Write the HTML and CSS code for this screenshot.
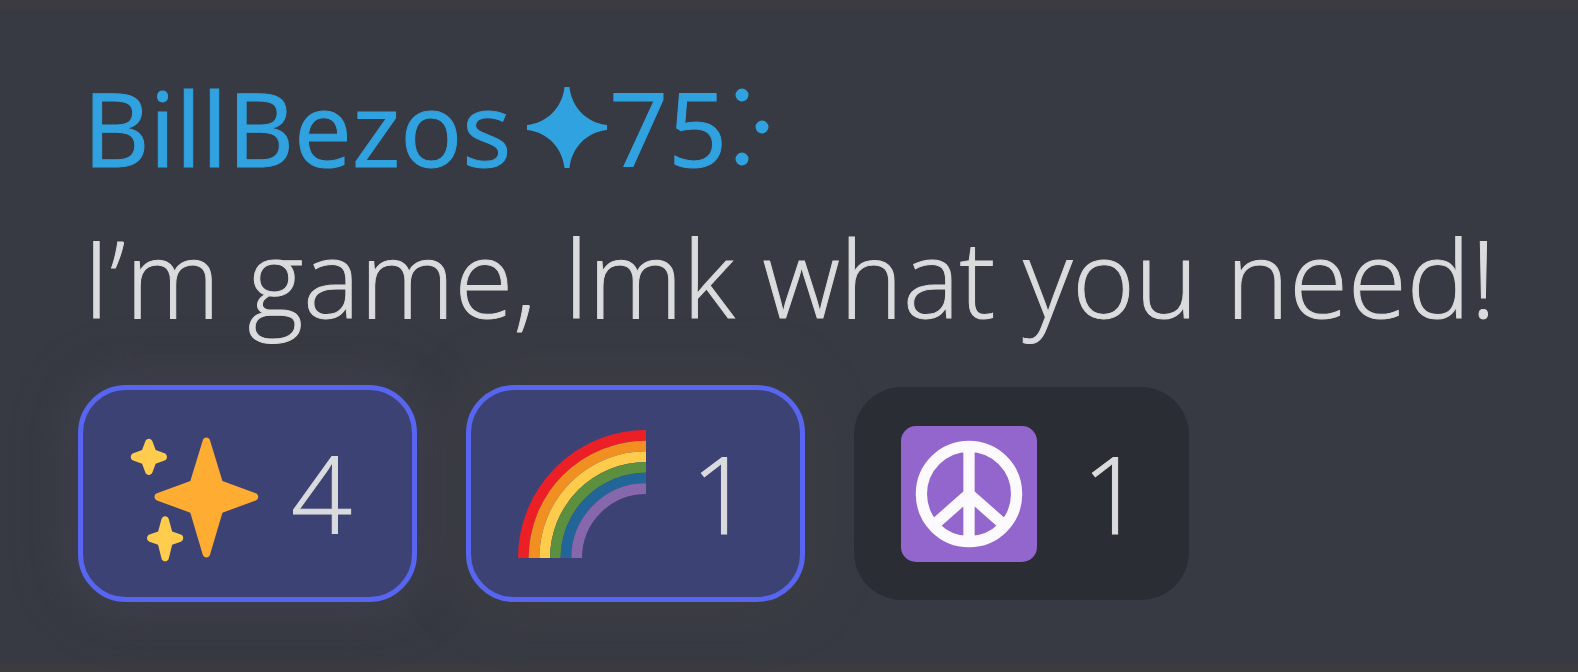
FILE: index.html
```html
<!DOCTYPE html>
<html lang="en">
<head>
<meta charset="utf-8">
<meta name="viewport" content="width=device-width, initial-scale=1">
<title>Message</title>
<link rel="stylesheet" href="styles.css">
</head>
<body>
<article class="message">
  <h1 class="author">
    <span>BillBezos</span>
    <svg class="author-star" viewBox="0 0 80 81" role="img" aria-label="star"><path d="M37.500 0h5c2 20 17 36 37.500 38v5c-20.500 2-35.500 18-37.500 38h-5c-2-20-17-36-37.500-38v-5c20.500-2 35.500-18 37.500-38z"/></svg>
    <span>75</span>
    <svg class="author-dots" viewBox="0 0 34 78" role="img" aria-label="dots"><circle cx="7" cy="7" r="6.500"/><circle cx="27" cy="39" r="6.500"/><circle cx="7" cy="71" r="6.500"/></svg>
  </h1>
  <p class="text">I’m game, lmk what you need!</p>
  <div class="reactions">
    <button class="reaction reaction-active reaction-glow" type="button" aria-pressed="true">
      <svg class="emoji emoji-sparkles" viewBox="0 0 36 36" aria-hidden="true">
        <path fill="#ffac33" d="M34.347 16.893l-8.899-3.294-3.323-10.891c-.128-.42-.517-.708-.956-.708-.439 0-.828.288-.956.708l-3.322 10.891-8.900 3.294c-.393.146-.653.519-.653.938 0 .418.260.793.653.938l8.895 3.293 3.324 11.223c.126.424.516.715.959.715.442 0 .833-.291.959-.716l3.324-11.223 8.896-3.293c.391-.144.652-.518.652-.937 0-.418-.261-.792-.653-.938z"/>
        <path fill="#ffcc4d" d="M14.347 27.894l-2.314-.856-.900-3.300c-.118-.436-.513-.738-.964-.738-.451 0-.846.302-.965.737l-.900 3.300-2.313.856c-.393.146-.653.520-.653.938 0 .418.260.793.653.938l2.301.853.907 3.622c.112.444.511.756.970.756.459 0 .858-.312.970-.757l.907-3.622 2.301-.853c.393-.144.653-.519.653-.937 0-.418-.260-.793-.653-.937zM10.009 6.231l-2.364-.875-.876-2.365c-.145-.393-.519-.653-.938-.653-.418 0-.792.260-.938.653l-.875 2.365-2.365.875c-.393.146-.653.520-.653.938 0 .418.260.793.653.938l2.365.875.875 2.365c.146.393.520.653.938.653.418 0 .792-.260.938-.653l.875-2.365 2.365-.875c.393-.146.653-.520.653-.938 0-.418-.260-.792-.653-.938z"/>
      </svg>
      <span class="count">4</span>
    </button>
    <button class="reaction reaction-active" type="button" aria-pressed="true">
      <svg class="emoji emoji-rainbow" viewBox="0 0 36 36" fill="none" stroke-width="3" aria-hidden="true">
        <path stroke="#ed1f26" d="M1.500 36A34.500 34.500 0 0 1 36 1.500"/>
        <path stroke="#f19020" d="M4.500 36A31.500 31.500 0 0 1 36 4.500"/>
        <path stroke="#ffcb4c" d="M7.500 36A28.500 28.500 0 0 1 36 7.500"/>
        <path stroke="#5c903f" d="M10.500 36A25.500 25.500 0 0 1 36 10.500"/>
        <path stroke="#226699" d="M13.500 36A22.500 22.500 0 0 1 36 13.500"/>
        <path stroke="#8767ac" d="M16.500 36A19.500 19.500 0 0 1 36 16.500"/>
      </svg>
      <span class="count">1</span>
    </button>
    <button class="reaction" type="button" aria-pressed="false">
      <svg class="emoji emoji-peace" viewBox="0 0 136 136" aria-hidden="true">
        <rect width="136" height="136" rx="15" fill="#9266cc"/>
        <g fill="none" stroke="#fcf9ff" stroke-width="11.300">
          <circle cx="68" cy="68" r="47.600"/>
          <path d="M68 20v96M68 68L34 98M68 68l34 30"/>
        </g>
      </svg>
      <span class="count">1</span>
    </button>
  </div>
</article>
</body>
</html>
```
FILE: styles.css
```css
* {
  box-sizing: border-box;
}

body {
  margin: 0;
  min-height: 100vh;
  background: #373a42;
  font-family: "Open Sans", "Noto Sans", sans-serif;
}

.message {
  isolation: isolate;
  min-height: 100vh;
  padding: 42px 78px 60px;
  border-top: 9px solid #3c3c40;
  border-bottom: 8px solid #3c3c40;
  color: #dadbdd;
}

.author {
  display: flex;
  align-items: center;
  margin: 0;
  padding-left: 5px;
  color: #30a2e0;
  font-size: 103px;
  font-weight: 500;
  line-height: 152px;
  -webkit-text-stroke: 1px currentColor;
}

.author-star {
  width: 80px;
  margin: 0 2px 0 16px;
  fill: currentColor;
}

.author-dots {
  width: 34px;
  margin-left: 8px;
  fill: currentColor;
}

.text {
  margin: 0;
  padding-left: 5px;
  font-size: 107px;
  font-weight: 300;
  line-height: 148px;
  white-space: nowrap;
  -webkit-text-stroke: 1px currentColor;
}

.reactions {
  display: flex;
  align-items: center;
  gap: 49px;
  margin-top: 34px;
}

.reaction {
  position: relative;
  display: flex;
  align-items: center;
  gap: 45px;
  width: 335px;
  height: 213px;
  padding: 0 0 0 47px;
  border: 0;
  border-radius: 48px;
  background: #2b2d34;
  color: inherit;
  font: inherit;
  font-size: 107px;
  font-weight: 300;
  line-height: 148px;
  -webkit-text-stroke: 1px currentColor;
}

.reaction-active {
  width: 339px;
  height: 217px;
  border: 5px solid #5765f0;
  background: #3d4275;
}

/* The halo sits behind every reaction and the message text. */
.reaction-active::before {
  content: "";
  position: absolute;
  inset: 0;
  z-index: -1;
  border-radius: 48px;
  box-shadow: 0 0 32px 36px rgba(60, 61, 69, 0.7);
}

.reaction-glow::before {
  box-shadow: 0 0 32px 16px rgba(60, 63, 80, 0.7), 0 0 32px 36px rgba(60, 61, 69, 0.7);
}

.reaction-glow {
  gap: 29px;
  padding-left: 44px;
}

.count {
  padding-bottom: 2px;
}

.emoji {
  flex: none;
}

.emoji-sparkles {
  width: 135px;
  margin-top: 8px;
}

.emoji-rainbow {
  width: 128px;
}

.emoji-peace {
  width: 136px;
}
```
